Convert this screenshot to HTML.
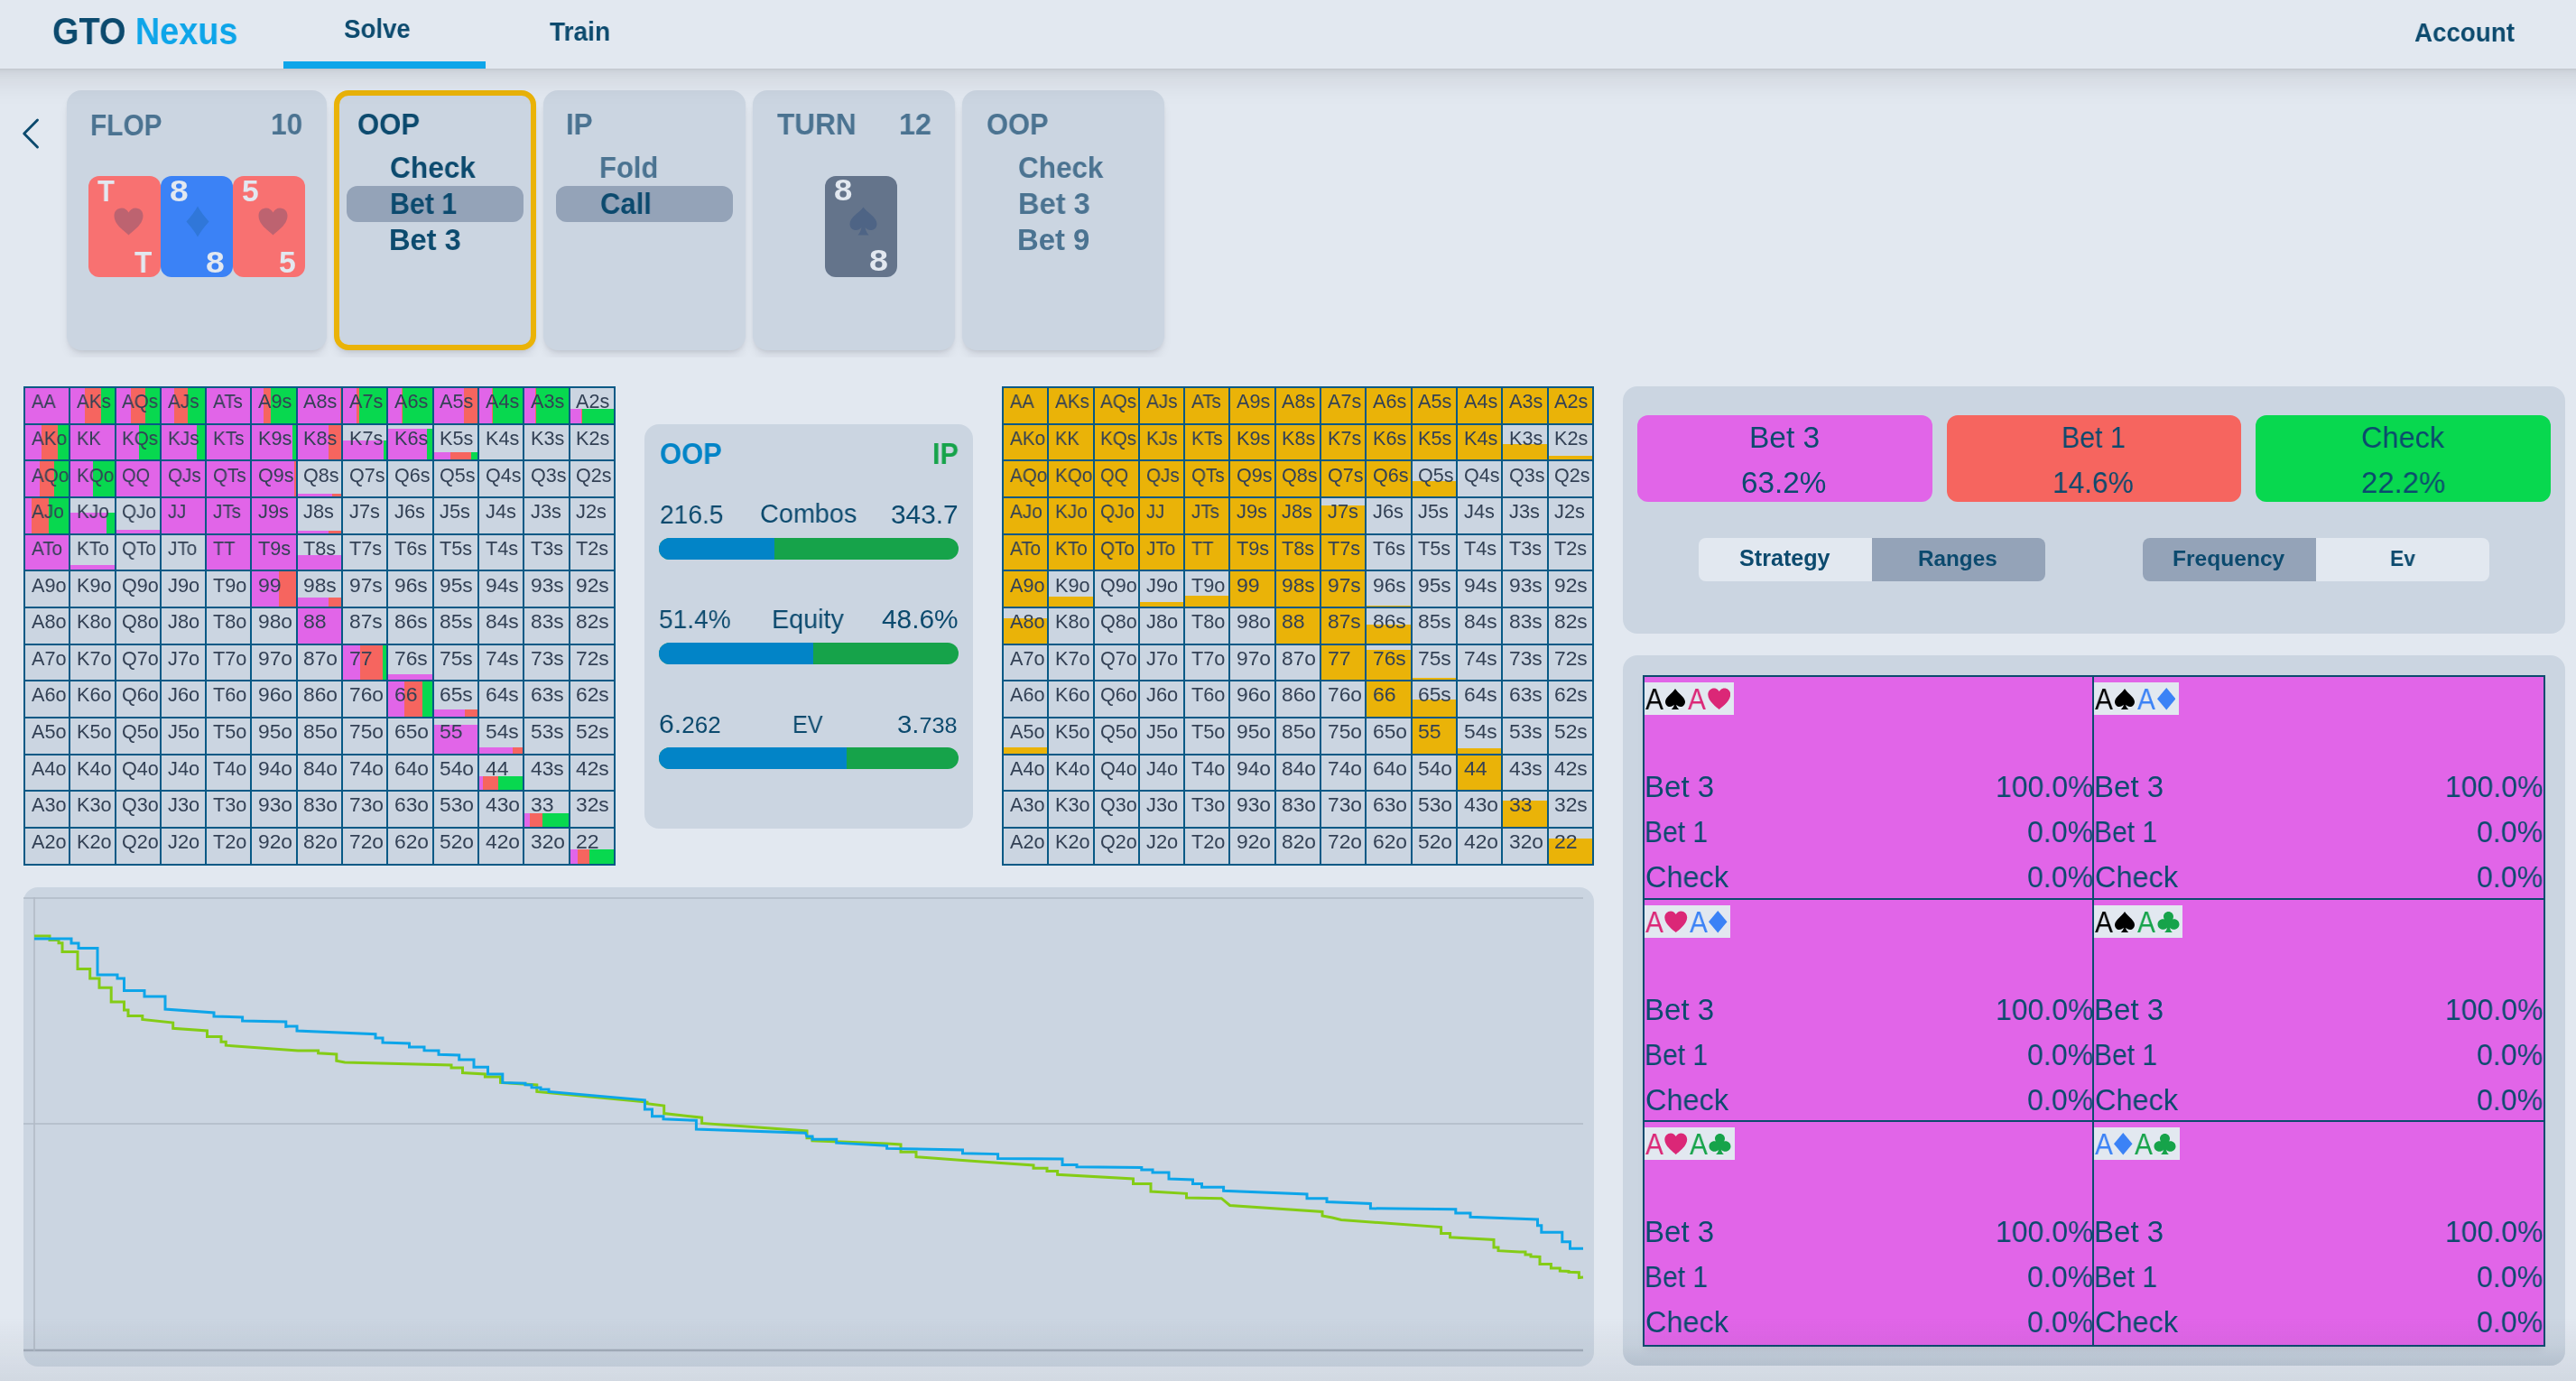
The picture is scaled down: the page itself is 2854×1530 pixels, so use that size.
<!DOCTYPE html>
<html><head><meta charset="utf-8"><title>GTO Nexus</title>
<style>
*{box-sizing:border-box;margin:0;padding:0}
html,body{width:2854px;height:1530px;overflow:hidden;background:#e2e8f0;font-family:"Liberation Sans",sans-serif;color:#0c4a6e}
.abs{position:absolute}
.t{position:absolute;white-space:nowrap;transform-origin:0 0;will-change:transform}
#hdr{position:absolute;z-index:10;left:-60px;top:0;width:2974px;padding-left:60px;height:76px;background:#e2e8f0;box-shadow:0 20px 30px -6px rgba(0,0,0,.085),0 8px 12px -8px rgba(0,0,0,.09),0 2px 2px -1px rgba(0,0,0,.06)}
.uline{position:absolute;left:314px;top:68px;width:224px;height:8px;background:#0ea5e9}
.card{position:absolute;top:100px;height:288px;background:#cbd5e1;border-radius:16px;box-shadow:0 8px 12px -3px rgba(15,23,42,.10),0 3px 5px -2px rgba(15,23,42,.10)}
.hl{position:absolute;height:40px;background:#94a3b8;border-radius:12px}
.pc{position:absolute;top:195px;width:80px;height:112px;border-radius:12px}
.sv{position:absolute}
.grid{position:absolute;top:428px;width:656px;height:531px;background:#075985;padding:2px;display:grid;grid-template-columns:repeat(13,48.3px);grid-template-rows:repeat(13,38.67px);gap:2px}
.c{position:relative;background:#cbd5e1;overflow:hidden}
.c b{position:absolute;left:0;right:0;bottom:0;display:flex}
.c b i{display:block;height:100%}
.c span{position:absolute;left:6.70px;top:5.22px;font-size:21.37px;line-height:21.37px;color:#334155;white-space:nowrap;transform:scaleX(0.95);transform-origin:0 0;will-change:transform}
.panel{position:absolute;background:#cbd5e1;border-radius:16px}
.bar{position:absolute;left:730px;width:332px;height:24px;border-radius:12px;overflow:hidden;background:#16a34a}
.bar i{position:absolute;left:0;top:0;bottom:0;background:#0284c7}
.abtn{position:absolute;top:460px;width:327px;height:95.5px;border-radius:12px}
.tog{position:absolute;top:596px;height:48px}
.lbx{position:absolute;height:36px;background:#e2e8f0}
</style></head>
<body>
<div id="hdr"><div style="position:absolute;left:60px;top:0;width:2854px;height:76px"><div class="uline"></div><div class="t " style="left:58.49px;top:14.34px;font-size:41.72px;line-height:41.72px;font-weight:bold;color:#0c4a6e;transform:scaleX(0.9073);">GTO <span style="color:#0ea5e9">Nexus</span></div><div class="t " style="left:381.37px;top:17.05px;font-size:29.51px;line-height:29.51px;font-weight:bold;color:#0c4a6e;transform:scaleX(0.9367);">Solve</div><div class="t " style="left:608.82px;top:21.39px;font-size:29.22px;line-height:29.22px;font-weight:bold;color:#0c4a6e;transform:scaleX(0.9619);">Train</div><div class="t " style="left:2674.51px;top:20.82px;font-size:29.36px;line-height:29.36px;font-weight:bold;color:#0c4a6e;transform:scaleX(0.9446);">Account</div></div></div>

<div id="cardrow" style="position:absolute;left:0;top:0;width:2854px;height:396px;overflow:hidden">
<svg class="abs" style="left:20px;top:126px" width="30" height="44" viewBox="0 0 30 44"><polyline points="21.5,7 6.7,22 21.5,37" fill="none" stroke="#0c4a6e" stroke-width="2.9" stroke-linecap="round" stroke-linejoin="round"/></svg>

<div class="card" style="left:74px;width:288px"></div>
<div class="card" style="left:370px;width:224px;border:6px solid #eab308"></div>
<div class="card" style="left:602px;width:224px"></div>
<div class="card" style="left:834px;width:224px"></div>
<div class="card" style="left:1066px;width:224px"></div>
<div class="hl" style="left:384px;top:206px;width:196px"></div>
<div class="hl" style="left:616px;top:206px;width:196px"></div>

<div class="pc" style="left:98px;background:#f87171"></div>
<div class="pc" style="left:178px;background:#3b82f6"></div>
<div class="pc" style="left:258px;background:#f87171"></div>
<div class="pc" style="left:914px;background:#64748b"></div>
<svg class="sv" style="left:126px;top:230px" width="33" height="31" viewBox="0 0 33 31"><path d="M16.5 30.5 C12 26 0.5 19 0.5 9 C0.5 4 4 0.5 8.8 0.5 C12.3 0.5 15 2.6 16.5 5.6 C18 2.6 20.7 0.5 24.2 0.5 C29 0.5 32.5 4 32.5 9 C32.5 19 21 26 16.5 30.5Z" fill="#bd6370"/></svg>
<svg class="sv" style="left:205.5px;top:227.5px" width="26" height="35" viewBox="0 0 26 35"><path d="M13 0.5 C16 6 20.5 12 25.5 17.5 C20.5 23 16 29 13 34.5 C10 29 5.5 23 0.5 17.5 C5.5 12 10 6 13 0.5Z" fill="#3077d9"/></svg>
<svg class="sv" style="left:286px;top:230px" width="33" height="31" viewBox="0 0 33 31"><path d="M16.5 30.5 C12 26 0.5 19 0.5 9 C0.5 4 4 0.5 8.8 0.5 C12.3 0.5 15 2.6 16.5 5.6 C18 2.6 20.7 0.5 24.2 0.5 C29 0.5 32.5 4 32.5 9 C32.5 19 21 26 16.5 30.5Z" fill="#bd6370"/></svg>
<svg class="sv" style="left:941px;top:229px" width="31" height="32" viewBox="0 0 31 32"><path d="M15.5 0.5 C19 6 30.5 11.5 30.5 19 C30.5 23.5 27.2 26 23.8 26 C21.2 26 19.2 24.8 17.6 23 C18 26.5 19.5 29 21.5 31.5 L9.5 31.5 C11.5 29 13 26.5 13.4 23 C11.8 24.8 9.8 26 7.2 26 C3.8 26 0.5 23.5 0.5 19 C0.5 11.5 12 6 15.5 0.5Z" fill="#4e6485"/></svg>
<div class="t " style="left:108.29px;top:194.71px;font-size:33.58px;line-height:33.58px;font-weight:bold;color:#e2e8f0;transform:scaleX(0.9238);">T</div><div class="t " style="left:148.88px;top:273.76px;font-size:33.28px;line-height:33.28px;font-weight:bold;color:#e2e8f0;transform:scaleX(0.9471);">T</div><div class="t " style="left:187.79px;top:194.29px;font-size:34.01px;line-height:34.01px;font-weight:bold;color:#e2e8f0;transform:scaleX(1.0925);">8</div><div class="t " style="left:227.59px;top:274.31px;font-size:33.58px;line-height:33.58px;font-weight:bold;color:#e2e8f0;transform:scaleX(1.1127);">8</div><div class="t " style="left:268.49px;top:194.71px;font-size:33.58px;line-height:33.58px;font-weight:bold;color:#e2e8f0;transform:scaleX(0.9998);">5</div><div class="t " style="left:308.99px;top:273.78px;font-size:33.43px;line-height:33.43px;font-weight:bold;color:#e2e8f0;transform:scaleX(1.0101);">5</div><div class="t " style="left:924.21px;top:194.65px;font-size:32.70px;line-height:32.70px;font-weight:bold;color:#e2e8f0;transform:scaleX(1.1176);">8</div><div class="t " style="left:963.47px;top:273.15px;font-size:32.70px;line-height:32.70px;font-weight:bold;color:#e2e8f0;transform:scaleX(1.1548);">8</div>
<div class="t " style="left:100.39px;top:121.76px;font-size:33.28px;line-height:33.28px;font-weight:bold;color:#4b7391;transform:scaleX(0.8960);">FLOP</div><div class="t " style="left:300.02px;top:121.37px;font-size:33.87px;line-height:33.87px;font-weight:bold;color:#4b7391;transform:scaleX(0.9349);">10</div><div class="t " style="left:396.46px;top:121.34px;font-size:33.72px;line-height:33.72px;font-weight:bold;color:#0c4a6e;transform:scaleX(0.9211);">OOP</div><div class="t " style="left:432.33px;top:169.27px;font-size:33.87px;line-height:33.87px;font-weight:bold;color:#0c4a6e;transform:scaleX(0.9339);">Check</div><div class="t " style="left:431.55px;top:209.41px;font-size:33.58px;line-height:33.58px;font-weight:bold;color:#0c4a6e;transform:scaleX(0.9024);">Bet 1</div><div class="t " style="left:431.40px;top:249.65px;font-size:32.70px;line-height:32.70px;font-weight:bold;color:#0c4a6e;transform:scaleX(0.9973);">Bet 3</div><div class="t " style="left:627.28px;top:121.34px;font-size:33.72px;line-height:33.72px;font-weight:bold;color:#4b7391;transform:scaleX(0.9328);">IP</div><div class="t " style="left:663.71px;top:169.27px;font-size:33.87px;line-height:33.87px;font-weight:bold;color:#4b7391;transform:scaleX(0.9153);">Fold</div><div class="t " style="left:664.56px;top:209.41px;font-size:33.58px;line-height:33.58px;font-weight:bold;color:#0c4a6e;transform:scaleX(0.9233);">Call</div><div class="t " style="left:861.08px;top:121.34px;font-size:33.72px;line-height:33.72px;font-weight:bold;color:#4b7391;transform:scaleX(0.9369);">TURN</div><div class="t " style="left:996.38px;top:121.34px;font-size:33.72px;line-height:33.72px;font-weight:bold;color:#4b7391;transform:scaleX(0.9596);">12</div><div class="t " style="left:1092.57px;top:121.34px;font-size:33.72px;line-height:33.72px;font-weight:bold;color:#4b7391;transform:scaleX(0.9142);">OOP</div><div class="t " style="left:1128.44px;top:169.27px;font-size:33.87px;line-height:33.87px;font-weight:bold;color:#4b7391;transform:scaleX(0.9289);">Check</div><div class="t " style="left:1127.50px;top:209.41px;font-size:33.58px;line-height:33.58px;font-weight:bold;color:#4b7391;transform:scaleX(0.9701);">Bet 3</div><div class="t " style="left:1127.48px;top:249.65px;font-size:32.70px;line-height:32.70px;font-weight:bold;color:#4b7391;transform:scaleX(1.0051);">Bet 9</div>
</div>

<div class="grid" style="left:26px"><div class="c"><b style="height:100.00%"><i style="width:100.00%;background:#e165e8"></i></b><span style="transform:scaleX(0.940)">AA</span></div><div class="c"><b style="height:100.00%"><i style="width:33.00%;background:#e165e8"></i><i style="width:36.00%;background:#f6655f"></i><i style="width:31.00%;background:#08d84f"></i></b><span style="transform:scaleX(0.967)">AKs</span></div><div class="c"><b style="height:100.00%"><i style="width:34.00%;background:#e165e8"></i><i style="width:33.00%;background:#f6655f"></i><i style="width:33.00%;background:#08d84f"></i></b><span style="transform:scaleX(0.966)">AQs</span></div><div class="c"><b style="height:100.00%"><i style="width:29.00%;background:#e165e8"></i><i style="width:31.00%;background:#f6655f"></i><i style="width:40.00%;background:#08d84f"></i></b><span style="transform:scaleX(0.970)">AJs</span></div><div class="c"><b style="height:100.00%"><i style="width:100.00%;background:#e165e8"></i></b><span style="transform:scaleX(0.968)">ATs</span></div><div class="c"><b style="height:100.00%"><i style="width:25.00%;background:#e165e8"></i><i style="width:18.00%;background:#f6655f"></i><i style="width:57.00%;background:#08d84f"></i></b><span style="transform:scaleX(1.014)">A9s</span></div><div class="c"><b style="height:100.00%"><i style="width:98.50%;background:#e165e8"></i><i style="width:1.50%;background:#f6655f"></i></b><span style="transform:scaleX(1.014)">A8s</span></div><div class="c"><b style="height:100.00%"><i style="width:31.00%;background:#e165e8"></i><i style="width:6.00%;background:#f6655f"></i><i style="width:63.00%;background:#08d84f"></i></b><span style="transform:scaleX(1.014)">A7s</span></div><div class="c"><b style="height:100.00%"><i style="width:30.00%;background:#e165e8"></i><i style="width:2.00%;background:#f6655f"></i><i style="width:68.00%;background:#08d84f"></i></b><span style="transform:scaleX(1.014)">A6s</span></div><div class="c"><b style="height:100.00%"><i style="width:69.00%;background:#e165e8"></i><i style="width:31.00%;background:#f6655f"></i></b><span style="transform:scaleX(1.014)">A5s</span></div><div class="c"><b style="height:100.00%"><i style="width:29.00%;background:#e165e8"></i><i style="width:2.00%;background:#f6655f"></i><i style="width:69.00%;background:#08d84f"></i></b><span style="transform:scaleX(1.014)">A4s</span></div><div class="c"><b style="height:100.00%"><i style="width:25.00%;background:#e165e8"></i><i style="width:2.00%;background:#f6655f"></i><i style="width:73.00%;background:#08d84f"></i></b><span style="transform:scaleX(1.014)">A3s</span></div><div class="c"><b style="height:40.00%"><i style="width:25.00%;background:#e165e8"></i><i style="width:2.00%;background:#f6655f"></i><i style="width:73.00%;background:#08d84f"></i></b><span style="transform:scaleX(1.014)">A2s</span></div><div class="c"><b style="height:100.00%"><i style="width:38.00%;background:#e165e8"></i><i style="width:37.00%;background:#f6655f"></i><i style="width:25.00%;background:#08d84f"></i></b><span style="transform:scaleX(0.969)">AKo</span></div><div class="c"><b style="height:100.00%"><i style="width:100.00%;background:#e165e8"></i></b><span style="transform:scaleX(0.940)">KK</span></div><div class="c"><b style="height:100.00%"><i style="width:52.00%;background:#e165e8"></i><i style="width:48.00%;background:#08d84f"></i></b><span style="transform:scaleX(0.966)">KQs</span></div><div class="c"><b style="height:100.00%"><i style="width:81.00%;background:#e165e8"></i><i style="width:19.00%;background:#08d84f"></i></b><span style="transform:scaleX(0.970)">KJs</span></div><div class="c"><b style="height:100.00%"><i style="width:100.00%;background:#e165e8"></i></b><span style="transform:scaleX(0.968)">KTs</span></div><div class="c"><b style="height:100.00%"><i style="width:92.00%;background:#e165e8"></i><i style="width:8.00%;background:#08d84f"></i></b><span style="transform:scaleX(1.014)">K9s</span></div><div class="c"><b style="height:100.00%"><i style="width:71.00%;background:#e165e8"></i><i style="width:29.00%;background:#f6655f"></i></b><span style="transform:scaleX(1.014)">K8s</span></div><div class="c"><b style="height:55.00%"><i style="width:94.00%;background:#e165e8"></i><i style="width:6.00%;background:#08d84f"></i></b><span style="transform:scaleX(1.014)">K7s</span></div><div class="c"><b style="height:89.00%"><i style="width:88.00%;background:#e165e8"></i><i style="width:12.00%;background:#08d84f"></i></b><span style="transform:scaleX(1.014)">K6s</span></div><div class="c"><b style="height:21.00%"><i style="width:38.00%;background:#e165e8"></i><i style="width:48.00%;background:#f6655f"></i><i style="width:14.00%;background:#08d84f"></i></b><span style="transform:scaleX(1.014)">K5s</span></div><div class="c"><span style="transform:scaleX(1.014)">K4s</span></div><div class="c"><span style="transform:scaleX(1.014)">K3s</span></div><div class="c"><span style="transform:scaleX(1.014)">K2s</span></div><div class="c"><b style="height:100.00%"><i style="width:34.00%;background:#e165e8"></i><i style="width:33.00%;background:#f6655f"></i><i style="width:33.00%;background:#08d84f"></i></b><span style="transform:scaleX(0.968)">AQo</span></div><div class="c"><b style="height:100.00%"><i style="width:51.00%;background:#e165e8"></i><i style="width:49.00%;background:#08d84f"></i></b><span style="transform:scaleX(0.968)">KQo</span></div><div class="c"><b style="height:100.00%"><i style="width:100.00%;background:#e165e8"></i></b><span style="transform:scaleX(0.940)">QQ</span></div><div class="c"><b style="height:100.00%"><i style="width:100.00%;background:#e165e8"></i></b><span style="transform:scaleX(0.968)">QJs</span></div><div class="c"><b style="height:100.00%"><i style="width:100.00%;background:#e165e8"></i></b><span style="transform:scaleX(0.966)">QTs</span></div><div class="c"><b style="height:100.00%"><i style="width:96.00%;background:#e165e8"></i><i style="width:4.00%;background:#f6655f"></i></b><span style="transform:scaleX(1.010)">Q9s</span></div><div class="c"><b style="height:6.50%"><i style="width:79.00%;background:#e165e8"></i><i style="width:21.00%;background:#f6655f"></i></b><span style="transform:scaleX(1.010)">Q8s</span></div><div class="c"><span style="transform:scaleX(1.010)">Q7s</span></div><div class="c"><span style="transform:scaleX(1.010)">Q6s</span></div><div class="c"><span style="transform:scaleX(1.010)">Q5s</span></div><div class="c"><span style="transform:scaleX(1.010)">Q4s</span></div><div class="c"><span style="transform:scaleX(1.010)">Q3s</span></div><div class="c"><span style="transform:scaleX(1.010)">Q2s</span></div><div class="c"><b style="height:100.00%"><i style="width:15.00%;background:#e165e8"></i><i style="width:39.00%;background:#f6655f"></i><i style="width:46.00%;background:#08d84f"></i></b><span style="transform:scaleX(0.972)">AJo</span></div><div class="c"><b style="height:58.00%"><i style="width:82.00%;background:#e165e8"></i><i style="width:18.00%;background:#08d84f"></i></b><span style="transform:scaleX(0.972)">KJo</span></div><div class="c"><b style="height:10.00%"><i style="width:100.00%;background:#e165e8"></i></b><span style="transform:scaleX(0.970)">QJo</span></div><div class="c"><b style="height:100.00%"><i style="width:100.00%;background:#e165e8"></i></b><span style="transform:scaleX(0.940)">JJ</span></div><div class="c"><b style="height:100.00%"><i style="width:100.00%;background:#e165e8"></i></b><span style="transform:scaleX(0.971)">JTs</span></div><div class="c"><b style="height:100.00%"><i style="width:100.00%;background:#e165e8"></i></b><span style="transform:scaleX(1.022)">J9s</span></div><div class="c"><b style="height:8.00%"><i style="width:71.00%;background:#e165e8"></i><i style="width:29.00%;background:#f6655f"></i></b><span style="transform:scaleX(1.022)">J8s</span></div><div class="c"><span style="transform:scaleX(1.022)">J7s</span></div><div class="c"><span style="transform:scaleX(1.022)">J6s</span></div><div class="c"><span style="transform:scaleX(1.022)">J5s</span></div><div class="c"><span style="transform:scaleX(1.022)">J4s</span></div><div class="c"><span style="transform:scaleX(1.022)">J3s</span></div><div class="c"><span style="transform:scaleX(1.022)">J2s</span></div><div class="c"><b style="height:100.00%"><i style="width:100.00%;background:#e165e8"></i></b><span style="transform:scaleX(0.970)">ATo</span></div><div class="c"><b style="height:14.50%"><i style="width:100.00%;background:#e165e8"></i></b><span style="transform:scaleX(0.970)">KTo</span></div><div class="c"><span style="transform:scaleX(0.969)">QTo</span></div><div class="c"><span style="transform:scaleX(0.973)">JTo</span></div><div class="c"><b style="height:100.00%"><i style="width:100.00%;background:#e165e8"></i></b><span style="transform:scaleX(0.940)">TT</span></div><div class="c"><b style="height:100.00%"><i style="width:100.00%;background:#e165e8"></i></b><span style="transform:scaleX(1.017)">T9s</span></div><div class="c"><b style="height:42.00%"><i style="width:100.00%;background:#e165e8"></i></b><span style="transform:scaleX(1.017)">T8s</span></div><div class="c"><span style="transform:scaleX(1.017)">T7s</span></div><div class="c"><span style="transform:scaleX(1.017)">T6s</span></div><div class="c"><span style="transform:scaleX(1.017)">T5s</span></div><div class="c"><span style="transform:scaleX(1.017)">T4s</span></div><div class="c"><span style="transform:scaleX(1.017)">T3s</span></div><div class="c"><span style="transform:scaleX(1.017)">T2s</span></div><div class="c"><span style="transform:scaleX(1.015)">A9o</span></div><div class="c"><span style="transform:scaleX(1.015)">K9o</span></div><div class="c"><span style="transform:scaleX(1.011)">Q9o</span></div><div class="c"><span style="transform:scaleX(1.023)">J9o</span></div><div class="c"><span style="transform:scaleX(1.017)">T9o</span></div><div class="c"><b style="height:100.00%"><i style="width:62.00%;background:#e165e8"></i><i style="width:38.00%;background:#f6655f"></i></b><span style="transform:scaleX(1.080)">99</span></div><div class="c"><b style="height:24.50%"><i style="width:71.00%;background:#e165e8"></i><i style="width:29.00%;background:#f6655f"></i></b><span style="transform:scaleX(1.068)">98s</span></div><div class="c"><span style="transform:scaleX(1.068)">97s</span></div><div class="c"><span style="transform:scaleX(1.068)">96s</span></div><div class="c"><span style="transform:scaleX(1.068)">95s</span></div><div class="c"><span style="transform:scaleX(1.068)">94s</span></div><div class="c"><span style="transform:scaleX(1.068)">93s</span></div><div class="c"><span style="transform:scaleX(1.068)">92s</span></div><div class="c"><span style="transform:scaleX(1.015)">A8o</span></div><div class="c"><span style="transform:scaleX(1.015)">K8o</span></div><div class="c"><span style="transform:scaleX(1.011)">Q8o</span></div><div class="c"><span style="transform:scaleX(1.023)">J8o</span></div><div class="c"><span style="transform:scaleX(1.017)">T8o</span></div><div class="c"><span style="transform:scaleX(1.067)">98o</span></div><div class="c"><b style="height:100.00%"><i style="width:100.00%;background:#e165e8"></i></b><span style="transform:scaleX(1.080)">88</span></div><div class="c"><span style="transform:scaleX(1.068)">87s</span></div><div class="c"><span style="transform:scaleX(1.068)">86s</span></div><div class="c"><span style="transform:scaleX(1.068)">85s</span></div><div class="c"><span style="transform:scaleX(1.068)">84s</span></div><div class="c"><span style="transform:scaleX(1.068)">83s</span></div><div class="c"><span style="transform:scaleX(1.068)">82s</span></div><div class="c"><span style="transform:scaleX(1.015)">A7o</span></div><div class="c"><span style="transform:scaleX(1.015)">K7o</span></div><div class="c"><span style="transform:scaleX(1.011)">Q7o</span></div><div class="c"><span style="transform:scaleX(1.023)">J7o</span></div><div class="c"><span style="transform:scaleX(1.017)">T7o</span></div><div class="c"><span style="transform:scaleX(1.067)">97o</span></div><div class="c"><span style="transform:scaleX(1.067)">87o</span></div><div class="c"><b style="height:100.00%"><i style="width:39.00%;background:#e165e8"></i><i style="width:51.00%;background:#f6655f"></i><i style="width:10.00%;background:#08d84f"></i></b><span style="transform:scaleX(1.080)">77</span></div><div class="c"><b style="height:17.00%"><i style="width:100.00%;background:#e165e8"></i></b><span style="transform:scaleX(1.068)">76s</span></div><div class="c"><span style="transform:scaleX(1.068)">75s</span></div><div class="c"><span style="transform:scaleX(1.068)">74s</span></div><div class="c"><span style="transform:scaleX(1.068)">73s</span></div><div class="c"><span style="transform:scaleX(1.068)">72s</span></div><div class="c"><span style="transform:scaleX(1.015)">A6o</span></div><div class="c"><span style="transform:scaleX(1.015)">K6o</span></div><div class="c"><span style="transform:scaleX(1.011)">Q6o</span></div><div class="c"><span style="transform:scaleX(1.023)">J6o</span></div><div class="c"><span style="transform:scaleX(1.017)">T6o</span></div><div class="c"><span style="transform:scaleX(1.067)">96o</span></div><div class="c"><span style="transform:scaleX(1.067)">86o</span></div><div class="c"><span style="transform:scaleX(1.067)">76o</span></div><div class="c"><b style="height:100.00%"><i style="width:36.00%;background:#e165e8"></i><i style="width:42.00%;background:#f6655f"></i><i style="width:22.00%;background:#08d84f"></i></b><span style="transform:scaleX(1.080)">66</span></div><div class="c"><b style="height:20.00%"><i style="width:71.00%;background:#e165e8"></i><i style="width:29.00%;background:#f6655f"></i></b><span style="transform:scaleX(1.068)">65s</span></div><div class="c"><span style="transform:scaleX(1.068)">64s</span></div><div class="c"><span style="transform:scaleX(1.068)">63s</span></div><div class="c"><span style="transform:scaleX(1.068)">62s</span></div><div class="c"><span style="transform:scaleX(1.015)">A5o</span></div><div class="c"><span style="transform:scaleX(1.015)">K5o</span></div><div class="c"><span style="transform:scaleX(1.011)">Q5o</span></div><div class="c"><span style="transform:scaleX(1.023)">J5o</span></div><div class="c"><span style="transform:scaleX(1.017)">T5o</span></div><div class="c"><span style="transform:scaleX(1.067)">95o</span></div><div class="c"><span style="transform:scaleX(1.067)">85o</span></div><div class="c"><span style="transform:scaleX(1.067)">75o</span></div><div class="c"><span style="transform:scaleX(1.067)">65o</span></div><div class="c"><b style="height:82.00%"><i style="width:100.00%;background:#e165e8"></i></b><span style="transform:scaleX(1.080)">55</span></div><div class="c"><b style="height:17.00%"><i style="width:77.00%;background:#e165e8"></i><i style="width:23.00%;background:#f6655f"></i></b><span style="transform:scaleX(1.068)">54s</span></div><div class="c"><span style="transform:scaleX(1.068)">53s</span></div><div class="c"><span style="transform:scaleX(1.068)">52s</span></div><div class="c"><span style="transform:scaleX(1.015)">A4o</span></div><div class="c"><span style="transform:scaleX(1.015)">K4o</span></div><div class="c"><span style="transform:scaleX(1.011)">Q4o</span></div><div class="c"><span style="transform:scaleX(1.023)">J4o</span></div><div class="c"><span style="transform:scaleX(1.017)">T4o</span></div><div class="c"><span style="transform:scaleX(1.067)">94o</span></div><div class="c"><span style="transform:scaleX(1.067)">84o</span></div><div class="c"><span style="transform:scaleX(1.067)">74o</span></div><div class="c"><span style="transform:scaleX(1.067)">64o</span></div><div class="c"><span style="transform:scaleX(1.067)">54o</span></div><div class="c"><b style="height:40.00%"><i style="width:8.00%;background:#e165e8"></i><i style="width:35.00%;background:#f6655f"></i><i style="width:57.00%;background:#08d84f"></i></b><span style="transform:scaleX(1.080)">44</span></div><div class="c"><span style="transform:scaleX(1.068)">43s</span></div><div class="c"><span style="transform:scaleX(1.068)">42s</span></div><div class="c"><span style="transform:scaleX(1.015)">A3o</span></div><div class="c"><span style="transform:scaleX(1.015)">K3o</span></div><div class="c"><span style="transform:scaleX(1.011)">Q3o</span></div><div class="c"><span style="transform:scaleX(1.023)">J3o</span></div><div class="c"><span style="transform:scaleX(1.017)">T3o</span></div><div class="c"><span style="transform:scaleX(1.067)">93o</span></div><div class="c"><span style="transform:scaleX(1.067)">83o</span></div><div class="c"><span style="transform:scaleX(1.067)">73o</span></div><div class="c"><span style="transform:scaleX(1.067)">63o</span></div><div class="c"><span style="transform:scaleX(1.067)">53o</span></div><div class="c"><span style="transform:scaleX(1.067)">43o</span></div><div class="c"><b style="height:39.00%"><i style="width:12.50%;background:#e165e8"></i><i style="width:29.00%;background:#f6655f"></i><i style="width:58.50%;background:#08d84f"></i></b><span style="transform:scaleX(1.080)">33</span></div><div class="c"><span style="transform:scaleX(1.068)">32s</span></div><div class="c"><span style="transform:scaleX(1.015)">A2o</span></div><div class="c"><span style="transform:scaleX(1.015)">K2o</span></div><div class="c"><span style="transform:scaleX(1.011)">Q2o</span></div><div class="c"><span style="transform:scaleX(1.023)">J2o</span></div><div class="c"><span style="transform:scaleX(1.017)">T2o</span></div><div class="c"><span style="transform:scaleX(1.067)">92o</span></div><div class="c"><span style="transform:scaleX(1.067)">82o</span></div><div class="c"><span style="transform:scaleX(1.067)">72o</span></div><div class="c"><span style="transform:scaleX(1.067)">62o</span></div><div class="c"><span style="transform:scaleX(1.067)">52o</span></div><div class="c"><span style="transform:scaleX(1.067)">42o</span></div><div class="c"><span style="transform:scaleX(1.067)">32o</span></div><div class="c"><b style="height:39.00%"><i style="width:17.00%;background:#e165e8"></i><i style="width:27.00%;background:#f6655f"></i><i style="width:56.00%;background:#08d84f"></i></b><span style="transform:scaleX(1.080)">22</span></div></div>

<div class="panel" style="left:714px;top:470px;width:364px;height:448px"></div>
<div class="bar" style="top:596px"><i style="width:128px"></i></div>
<div class="bar" style="top:712px"><i style="width:171px"></i></div>
<div class="bar" style="top:828px"><i style="width:208px"></i></div>
<div class="t " style="left:730.76px;top:486.59px;font-size:32.41px;line-height:32.41px;font-weight:bold;color:#0284c7;transform:scaleX(0.9539);">OOP</div><div class="t " style="left:1032.93px;top:486.59px;font-size:32.41px;line-height:32.41px;font-weight:bold;color:#16a34a;transform:scaleX(0.9448);">IP</div><div class="t " style="left:730.59px;top:555.64px;font-size:28.92px;line-height:28.92px;font-weight:normal;color:#0c4a6e;transform:scaleX(0.9731);">216.5</div><div class="t " style="left:841.96px;top:555.47px;font-size:29.07px;line-height:29.07px;font-weight:normal;color:#0c4a6e;transform:scaleX(0.9920);">Combos</div><div class="t " style="left:987.18px;top:555.64px;font-size:28.92px;line-height:28.92px;font-weight:normal;color:#0c4a6e;transform:scaleX(1.0322);">343.7</div><div class="t " style="left:730.38px;top:671.07px;font-size:29.65px;line-height:29.65px;font-weight:normal;color:#0c4a6e;transform:scaleX(0.9470);">51.4%</div><div class="t " style="left:855.13px;top:671.07px;font-size:29.65px;line-height:29.65px;font-weight:normal;color:#0c4a6e;transform:scaleX(0.9698);">Equity</div><div class="t " style="left:976.83px;top:671.07px;font-size:29.65px;line-height:29.65px;font-weight:normal;color:#0c4a6e;transform:scaleX(1.0066);">48.6%</div><div class="t " style="left:729.59px;top:786.57px;font-size:29.65px;line-height:29.65px;font-weight:normal;color:#0c4a6e;transform:scaleX(1.0200);">6.<span style="font-size:86%">262</span></div><div class="t " style="left:878.22px;top:787.80px;font-size:28.20px;line-height:28.20px;font-weight:normal;color:#0c4a6e;transform:scaleX(0.8955);">EV</div><div class="t " style="left:994.00px;top:787.80px;font-size:28.20px;line-height:28.20px;font-weight:normal;color:#0c4a6e;transform:scaleX(1.0400);">3.<span style="font-size:86%">738</span></div>

<div class="grid" style="left:1110px"><div class="c"><b style="height:100.00%;background:#eab308"></b><span style="transform:scaleX(0.940)">AA</span></div><div class="c"><b style="height:100.00%;background:#eab308"></b><span style="transform:scaleX(0.967)">AKs</span></div><div class="c"><b style="height:100.00%;background:#eab308"></b><span style="transform:scaleX(0.966)">AQs</span></div><div class="c"><b style="height:100.00%;background:#eab308"></b><span style="transform:scaleX(0.970)">AJs</span></div><div class="c"><b style="height:100.00%;background:#eab308"></b><span style="transform:scaleX(0.968)">ATs</span></div><div class="c"><b style="height:100.00%;background:#eab308"></b><span style="transform:scaleX(1.014)">A9s</span></div><div class="c"><b style="height:100.00%;background:#eab308"></b><span style="transform:scaleX(1.014)">A8s</span></div><div class="c"><b style="height:100.00%;background:#eab308"></b><span style="transform:scaleX(1.014)">A7s</span></div><div class="c"><b style="height:100.00%;background:#eab308"></b><span style="transform:scaleX(1.014)">A6s</span></div><div class="c"><b style="height:100.00%;background:#eab308"></b><span style="transform:scaleX(1.014)">A5s</span></div><div class="c"><b style="height:100.00%;background:#eab308"></b><span style="transform:scaleX(1.014)">A4s</span></div><div class="c"><b style="height:100.00%;background:#eab308"></b><span style="transform:scaleX(1.014)">A3s</span></div><div class="c"><b style="height:100.00%;background:#eab308"></b><span style="transform:scaleX(1.014)">A2s</span></div><div class="c"><b style="height:100.00%;background:#eab308"></b><span style="transform:scaleX(0.969)">AKo</span></div><div class="c"><b style="height:100.00%;background:#eab308"></b><span style="transform:scaleX(0.940)">KK</span></div><div class="c"><b style="height:100.00%;background:#eab308"></b><span style="transform:scaleX(0.966)">KQs</span></div><div class="c"><b style="height:100.00%;background:#eab308"></b><span style="transform:scaleX(0.970)">KJs</span></div><div class="c"><b style="height:100.00%;background:#eab308"></b><span style="transform:scaleX(0.968)">KTs</span></div><div class="c"><b style="height:100.00%;background:#eab308"></b><span style="transform:scaleX(1.014)">K9s</span></div><div class="c"><b style="height:100.00%;background:#eab308"></b><span style="transform:scaleX(1.014)">K8s</span></div><div class="c"><b style="height:100.00%;background:#eab308"></b><span style="transform:scaleX(1.014)">K7s</span></div><div class="c"><b style="height:100.00%;background:#eab308"></b><span style="transform:scaleX(1.014)">K6s</span></div><div class="c"><b style="height:100.00%;background:#eab308"></b><span style="transform:scaleX(1.014)">K5s</span></div><div class="c"><b style="height:100.00%;background:#eab308"></b><span style="transform:scaleX(1.014)">K4s</span></div><div class="c"><b style="height:44.00%;background:#eab308"></b><span style="transform:scaleX(1.014)">K3s</span></div><div class="c"><b style="height:10.50%;background:#eab308"></b><span style="transform:scaleX(1.014)">K2s</span></div><div class="c"><b style="height:100.00%;background:#eab308"></b><span style="transform:scaleX(0.968)">AQo</span></div><div class="c"><b style="height:100.00%;background:#eab308"></b><span style="transform:scaleX(0.968)">KQo</span></div><div class="c"><b style="height:100.00%;background:#eab308"></b><span style="transform:scaleX(0.940)">QQ</span></div><div class="c"><b style="height:100.00%;background:#eab308"></b><span style="transform:scaleX(0.968)">QJs</span></div><div class="c"><b style="height:100.00%;background:#eab308"></b><span style="transform:scaleX(0.966)">QTs</span></div><div class="c"><b style="height:100.00%;background:#eab308"></b><span style="transform:scaleX(1.010)">Q9s</span></div><div class="c"><b style="height:100.00%;background:#eab308"></b><span style="transform:scaleX(1.010)">Q8s</span></div><div class="c"><b style="height:100.00%;background:#eab308"></b><span style="transform:scaleX(1.010)">Q7s</span></div><div class="c"><b style="height:100.00%;background:#eab308"></b><span style="transform:scaleX(1.010)">Q6s</span></div><div class="c"><b style="height:45.00%;background:#eab308"></b><span style="transform:scaleX(1.010)">Q5s</span></div><div class="c"><span style="transform:scaleX(1.010)">Q4s</span></div><div class="c"><span style="transform:scaleX(1.010)">Q3s</span></div><div class="c"><span style="transform:scaleX(1.010)">Q2s</span></div><div class="c"><b style="height:100.00%;background:#eab308"></b><span style="transform:scaleX(0.972)">AJo</span></div><div class="c"><b style="height:100.00%;background:#eab308"></b><span style="transform:scaleX(0.972)">KJo</span></div><div class="c"><b style="height:100.00%;background:#eab308"></b><span style="transform:scaleX(0.970)">QJo</span></div><div class="c"><b style="height:100.00%;background:#eab308"></b><span style="transform:scaleX(0.940)">JJ</span></div><div class="c"><b style="height:100.00%;background:#eab308"></b><span style="transform:scaleX(0.971)">JTs</span></div><div class="c"><b style="height:100.00%;background:#eab308"></b><span style="transform:scaleX(1.022)">J9s</span></div><div class="c"><b style="height:100.00%;background:#eab308"></b><span style="transform:scaleX(1.022)">J8s</span></div><div class="c"><b style="height:79.00%;background:#eab308"></b><span style="transform:scaleX(1.022)">J7s</span></div><div class="c"><span style="transform:scaleX(1.022)">J6s</span></div><div class="c"><span style="transform:scaleX(1.022)">J5s</span></div><div class="c"><span style="transform:scaleX(1.022)">J4s</span></div><div class="c"><span style="transform:scaleX(1.022)">J3s</span></div><div class="c"><span style="transform:scaleX(1.022)">J2s</span></div><div class="c"><b style="height:100.00%;background:#eab308"></b><span style="transform:scaleX(0.970)">ATo</span></div><div class="c"><b style="height:100.00%;background:#eab308"></b><span style="transform:scaleX(0.970)">KTo</span></div><div class="c"><b style="height:100.00%;background:#eab308"></b><span style="transform:scaleX(0.969)">QTo</span></div><div class="c"><b style="height:100.00%;background:#eab308"></b><span style="transform:scaleX(0.973)">JTo</span></div><div class="c"><b style="height:100.00%;background:#eab308"></b><span style="transform:scaleX(0.940)">TT</span></div><div class="c"><b style="height:100.00%;background:#eab308"></b><span style="transform:scaleX(1.017)">T9s</span></div><div class="c"><b style="height:100.00%;background:#eab308"></b><span style="transform:scaleX(1.017)">T8s</span></div><div class="c"><b style="height:100.00%;background:#eab308"></b><span style="transform:scaleX(1.017)">T7s</span></div><div class="c"><span style="transform:scaleX(1.017)">T6s</span></div><div class="c"><span style="transform:scaleX(1.017)">T5s</span></div><div class="c"><span style="transform:scaleX(1.017)">T4s</span></div><div class="c"><span style="transform:scaleX(1.017)">T3s</span></div><div class="c"><span style="transform:scaleX(1.017)">T2s</span></div><div class="c"><b style="height:100.00%;background:#eab308"></b><span style="transform:scaleX(1.015)">A9o</span></div><div class="c"><b style="height:28.00%;background:#eab308"></b><span style="transform:scaleX(1.015)">K9o</span></div><div class="c"><span style="transform:scaleX(1.011)">Q9o</span></div><div class="c"><b style="height:12.00%;background:#eab308"></b><span style="transform:scaleX(1.023)">J9o</span></div><div class="c"><b style="height:30.00%;background:#eab308"></b><span style="transform:scaleX(1.017)">T9o</span></div><div class="c"><b style="height:100.00%;background:#eab308"></b><span style="transform:scaleX(1.080)">99</span></div><div class="c"><b style="height:100.00%;background:#eab308"></b><span style="transform:scaleX(1.068)">98s</span></div><div class="c"><b style="height:100.00%;background:#eab308"></b><span style="transform:scaleX(1.068)">97s</span></div><div class="c"><b style="height:2.00%;background:#eab308"></b><span style="transform:scaleX(1.068)">96s</span></div><div class="c"><span style="transform:scaleX(1.068)">95s</span></div><div class="c"><span style="transform:scaleX(1.068)">94s</span></div><div class="c"><span style="transform:scaleX(1.068)">93s</span></div><div class="c"><span style="transform:scaleX(1.068)">92s</span></div><div class="c"><b style="height:71.00%;background:#eab308"></b><span style="transform:scaleX(1.015)">A8o</span></div><div class="c"><span style="transform:scaleX(1.015)">K8o</span></div><div class="c"><span style="transform:scaleX(1.011)">Q8o</span></div><div class="c"><span style="transform:scaleX(1.023)">J8o</span></div><div class="c"><span style="transform:scaleX(1.017)">T8o</span></div><div class="c"><span style="transform:scaleX(1.067)">98o</span></div><div class="c"><b style="height:100.00%;background:#eab308"></b><span style="transform:scaleX(1.080)">88</span></div><div class="c"><b style="height:100.00%;background:#eab308"></b><span style="transform:scaleX(1.068)">87s</span></div><div class="c"><b style="height:54.00%;background:#eab308"></b><span style="transform:scaleX(1.068)">86s</span></div><div class="c"><span style="transform:scaleX(1.068)">85s</span></div><div class="c"><span style="transform:scaleX(1.068)">84s</span></div><div class="c"><span style="transform:scaleX(1.068)">83s</span></div><div class="c"><span style="transform:scaleX(1.068)">82s</span></div><div class="c"><span style="transform:scaleX(1.015)">A7o</span></div><div class="c"><span style="transform:scaleX(1.015)">K7o</span></div><div class="c"><span style="transform:scaleX(1.011)">Q7o</span></div><div class="c"><span style="transform:scaleX(1.023)">J7o</span></div><div class="c"><span style="transform:scaleX(1.017)">T7o</span></div><div class="c"><span style="transform:scaleX(1.067)">97o</span></div><div class="c"><span style="transform:scaleX(1.067)">87o</span></div><div class="c"><b style="height:100.00%;background:#eab308"></b><span style="transform:scaleX(1.080)">77</span></div><div class="c"><b style="height:86.00%;background:#eab308"></b><span style="transform:scaleX(1.068)">76s</span></div><div class="c"><b style="height:7.00%;background:#eab308"></b><span style="transform:scaleX(1.068)">75s</span></div><div class="c"><span style="transform:scaleX(1.068)">74s</span></div><div class="c"><span style="transform:scaleX(1.068)">73s</span></div><div class="c"><span style="transform:scaleX(1.068)">72s</span></div><div class="c"><span style="transform:scaleX(1.015)">A6o</span></div><div class="c"><span style="transform:scaleX(1.015)">K6o</span></div><div class="c"><span style="transform:scaleX(1.011)">Q6o</span></div><div class="c"><span style="transform:scaleX(1.023)">J6o</span></div><div class="c"><span style="transform:scaleX(1.017)">T6o</span></div><div class="c"><span style="transform:scaleX(1.067)">96o</span></div><div class="c"><span style="transform:scaleX(1.067)">86o</span></div><div class="c"><span style="transform:scaleX(1.067)">76o</span></div><div class="c"><b style="height:100.00%;background:#eab308"></b><span style="transform:scaleX(1.080)">66</span></div><div class="c"><b style="height:50.00%;background:#eab308"></b><span style="transform:scaleX(1.068)">65s</span></div><div class="c"><span style="transform:scaleX(1.068)">64s</span></div><div class="c"><span style="transform:scaleX(1.068)">63s</span></div><div class="c"><span style="transform:scaleX(1.068)">62s</span></div><div class="c"><b style="height:17.00%;background:#eab308"></b><span style="transform:scaleX(1.015)">A5o</span></div><div class="c"><span style="transform:scaleX(1.015)">K5o</span></div><div class="c"><span style="transform:scaleX(1.011)">Q5o</span></div><div class="c"><span style="transform:scaleX(1.023)">J5o</span></div><div class="c"><span style="transform:scaleX(1.017)">T5o</span></div><div class="c"><span style="transform:scaleX(1.067)">95o</span></div><div class="c"><span style="transform:scaleX(1.067)">85o</span></div><div class="c"><span style="transform:scaleX(1.067)">75o</span></div><div class="c"><span style="transform:scaleX(1.067)">65o</span></div><div class="c"><b style="height:100.00%;background:#eab308"></b><span style="transform:scaleX(1.080)">55</span></div><div class="c"><b style="height:14.00%;background:#eab308"></b><span style="transform:scaleX(1.068)">54s</span></div><div class="c"><span style="transform:scaleX(1.068)">53s</span></div><div class="c"><span style="transform:scaleX(1.068)">52s</span></div><div class="c"><span style="transform:scaleX(1.015)">A4o</span></div><div class="c"><span style="transform:scaleX(1.015)">K4o</span></div><div class="c"><span style="transform:scaleX(1.011)">Q4o</span></div><div class="c"><span style="transform:scaleX(1.023)">J4o</span></div><div class="c"><span style="transform:scaleX(1.017)">T4o</span></div><div class="c"><span style="transform:scaleX(1.067)">94o</span></div><div class="c"><span style="transform:scaleX(1.067)">84o</span></div><div class="c"><span style="transform:scaleX(1.067)">74o</span></div><div class="c"><span style="transform:scaleX(1.067)">64o</span></div><div class="c"><span style="transform:scaleX(1.067)">54o</span></div><div class="c"><b style="height:100.00%;background:#eab308"></b><span style="transform:scaleX(1.080)">44</span></div><div class="c"><span style="transform:scaleX(1.068)">43s</span></div><div class="c"><span style="transform:scaleX(1.068)">42s</span></div><div class="c"><span style="transform:scaleX(1.015)">A3o</span></div><div class="c"><span style="transform:scaleX(1.015)">K3o</span></div><div class="c"><span style="transform:scaleX(1.011)">Q3o</span></div><div class="c"><span style="transform:scaleX(1.023)">J3o</span></div><div class="c"><span style="transform:scaleX(1.017)">T3o</span></div><div class="c"><span style="transform:scaleX(1.067)">93o</span></div><div class="c"><span style="transform:scaleX(1.067)">83o</span></div><div class="c"><span style="transform:scaleX(1.067)">73o</span></div><div class="c"><span style="transform:scaleX(1.067)">63o</span></div><div class="c"><span style="transform:scaleX(1.067)">53o</span></div><div class="c"><span style="transform:scaleX(1.067)">43o</span></div><div class="c"><b style="height:74.00%;background:#eab308"></b><span style="transform:scaleX(1.080)">33</span></div><div class="c"><span style="transform:scaleX(1.068)">32s</span></div><div class="c"><span style="transform:scaleX(1.015)">A2o</span></div><div class="c"><span style="transform:scaleX(1.015)">K2o</span></div><div class="c"><span style="transform:scaleX(1.011)">Q2o</span></div><div class="c"><span style="transform:scaleX(1.023)">J2o</span></div><div class="c"><span style="transform:scaleX(1.017)">T2o</span></div><div class="c"><span style="transform:scaleX(1.067)">92o</span></div><div class="c"><span style="transform:scaleX(1.067)">82o</span></div><div class="c"><span style="transform:scaleX(1.067)">72o</span></div><div class="c"><span style="transform:scaleX(1.067)">62o</span></div><div class="c"><span style="transform:scaleX(1.067)">52o</span></div><div class="c"><span style="transform:scaleX(1.067)">42o</span></div><div class="c"><span style="transform:scaleX(1.067)">32o</span></div><div class="c"><b style="height:70.00%;background:#eab308"></b><span style="transform:scaleX(1.080)">22</span></div></div>

<div class="panel" style="left:26px;top:983px;width:1740px;height:530.5px"></div>
<svg class="abs" style="left:0;top:0" width="2854" height="1530">
  <line x1="26" y1="995" x2="1754" y2="995" stroke="#b1bac6" stroke-width="1.6"/>
  <line x1="26" y1="1245" x2="1754" y2="1245" stroke="#b1bac6" stroke-width="1.6"/>
  <line x1="26" y1="1496" x2="1754" y2="1496" stroke="#a3adba" stroke-width="2.5"/>
  <line x1="38" y1="994" x2="38" y2="1497" stroke="#b1bac6" stroke-width="1.6"/>
  <polyline points="38.0,1037.0 55.0,1037.0 55.0,1041.5 65.0,1041.5 65.0,1044.8 69.0,1044.8 69.0,1054.5 86.0,1054.5 86.0,1073.4 99.7,1073.4 99.7,1083.9 110.0,1083.9 110.0,1094.3 123.2,1094.3 123.2,1110.0 137.5,1110.0 137.5,1119.0 142.0,1119.0 142.0,1125.6 157.8,1125.6 157.8,1129.5 191.7,1133.0 191.7,1139.3 229.5,1142.0 229.5,1148.4 245.0,1148.4 245.0,1154.3 250.3,1154.3 250.3,1158.2 330.0,1164.0 352.6,1164.0 352.6,1166.8 372.8,1168.0 372.8,1175.3 382.0,1176.9 500.0,1180.0 500.0,1183.0 512.5,1183.0 512.5,1188.5 537.4,1190.0 537.4,1193.0 554.5,1193.0 554.5,1199.4 594.8,1202.0 594.8,1209.5 717.0,1221.0 717.0,1222.7 735.7,1225.0 735.7,1233.6 777.6,1238.2 777.6,1244.4 894.0,1253.0 894.0,1260.7 900.0,1260.7 900.0,1263.8 982.6,1267.0 998.0,1268.0 998.0,1276.3 1015.0,1276.3 1015.0,1281.7 1080.0,1286.6 1145.0,1291.0 1145.0,1294.3 1160.0,1294.3 1160.0,1297.5 1171.6,1297.5 1171.6,1301.3 1255.5,1306.0 1255.5,1311.4 1275.0,1311.4 1275.0,1320.0 1314.5,1322.3 1314.5,1327.0 1353.3,1327.7 1362.6,1335.5 1465.0,1342.5 1465.0,1347.0 1476.0,1349.0 1486.0,1351.5 1596.6,1359.6 1596.6,1366.5 1606.6,1366.5 1606.6,1370.8 1655.0,1373.5 1655.0,1382.0 1660.0,1382.0 1660.0,1385.7 1683.6,1387.0 1690.0,1387.0 1690.0,1390.0 1696.0,1390.0 1696.0,1392.0 1706.0,1392.5 1706.0,1400.6 1718.4,1400.6 1718.4,1405.0 1728.3,1405.0 1728.3,1408.0 1738.0,1408.5 1738.0,1409.3 1749.4,1409.8 1749.4,1415.5 1754.0,1415.0" fill="none" stroke="#84cc16" stroke-width="3"/>
  <polyline points="38.0,1040.0 79.0,1040.0 79.0,1045.0 87.0,1045.0 87.0,1050.5 108.0,1050.5 108.0,1080.0 130.0,1080.0 130.0,1084.0 137.5,1084.0 137.5,1097.5 160.0,1097.5 160.0,1104.0 183.0,1104.0 183.0,1118.0 237.0,1122.0 237.0,1126.0 268.6,1127.0 268.6,1131.0 316.8,1132.0 316.8,1137.3 320.0,1137.0 329.0,1137.0 329.0,1142.0 416.0,1145.8 416.0,1150.0 424.0,1150.0 424.0,1155.0 453.5,1156.0 453.5,1160.0 470.0,1160.0 470.0,1163.7 486.0,1164.0 486.0,1168.3 508.7,1169.0 508.7,1174.0 525.0,1174.0 525.0,1182.3 540.5,1182.3 540.5,1190.0 556.8,1190.0 556.8,1199.4 582.0,1200.2 582.0,1201.7 589.0,1202.0 589.0,1204.8 599.0,1205.0 599.0,1206.8 608.0,1207.0 608.0,1209.5 714.4,1218.8 714.4,1229.0 722.5,1229.0 722.5,1236.7 735.0,1236.7 735.0,1239.8 771.4,1241.3 771.4,1251.0 892.5,1255.3 894.0,1259.0 900.0,1259.0 900.0,1262.3 926.7,1262.3 926.7,1266.2 982.6,1269.3 982.6,1272.4 1066.5,1274.0 1066.5,1277.8 1105.6,1278.6 1105.6,1283.5 1177.0,1284.0 1177.0,1290.5 1193.0,1290.5 1193.0,1292.8 1264.8,1293.6 1264.8,1296.0 1277.0,1296.0 1277.0,1299.0 1295.0,1299.0 1295.0,1306.0 1321.5,1307.0 1321.5,1311.4 1331.5,1311.4 1331.5,1315.3 1355.6,1315.3 1355.6,1319.2 1448.0,1323.0 1448.0,1327.7 1470.0,1327.7 1470.0,1331.6 1518.4,1333.5 1518.4,1338.8 1612.8,1339.8 1612.8,1344.0 1629.0,1344.0 1629.0,1348.2 1703.5,1351.0 1703.5,1357.8 1707.8,1357.8 1707.8,1365.2 1730.8,1365.2 1730.8,1375.8 1739.5,1375.8 1739.5,1383.2 1754.0,1383.2" fill="none" stroke="#0ea5e9" stroke-width="3"/>
</svg>

<div class="panel" style="left:1798px;top:428px;width:1044px;height:274px"></div>
<div class="abtn" style="left:1814px;background:#e165e8"></div>
<div class="abtn" style="left:2157px;width:326px;background:#f6655f"></div>
<div class="abtn" style="left:2499px;background:#08d84f"></div>
<div class="tog" style="left:1882px;width:192px;background:#e2e8f0;border-radius:8px 0 0 8px"></div>
<div class="tog" style="left:2074px;width:192px;background:#94a3b8;border-radius:0 8px 8px 0"></div>
<div class="tog" style="left:2374px;width:192px;background:#94a3b8;border-radius:8px 0 0 8px"></div>
<div class="tog" style="left:2566px;width:192px;background:#e2e8f0;border-radius:0 8px 8px 0"></div>
<div class="t " style="left:1937.63px;top:467.90px;font-size:32.99px;line-height:32.99px;font-weight:normal;color:#0c4a6e;transform:scaleX(1.0162);">Bet 3</div><div class="t " style="left:1929.33px;top:517.73px;font-size:33.14px;line-height:33.14px;font-weight:normal;color:#0c4a6e;transform:scaleX(1.0062);">63.2%</div><div class="t " style="left:2283.80px;top:467.90px;font-size:32.99px;line-height:32.99px;font-weight:normal;color:#0c4a6e;transform:scaleX(0.9196);">Bet 1</div><div class="t " style="left:2274.22px;top:517.73px;font-size:33.14px;line-height:33.14px;font-weight:normal;color:#0c4a6e;transform:scaleX(0.9556);">14.6%</div><div class="t " style="left:2615.58px;top:467.90px;font-size:32.99px;line-height:32.99px;font-weight:normal;color:#0c4a6e;transform:scaleX(0.9849);">Check</div><div class="t " style="left:2615.55px;top:517.73px;font-size:33.14px;line-height:33.14px;font-weight:normal;color:#0c4a6e;transform:scaleX(0.9930);">22.2%</div><div class="t " style="left:1927.35px;top:607.17px;font-size:24.85px;line-height:24.85px;font-weight:bold;color:#0c4a6e;transform:scaleX(1.0117);">Strategy</div><div class="t " style="left:2125.46px;top:607.44px;font-size:24.13px;line-height:24.13px;font-weight:bold;color:#0c4a6e;transform:scaleX(1.0063);">Ranges</div><div class="t " style="left:2407.04px;top:607.46px;font-size:24.27px;line-height:24.27px;font-weight:bold;color:#0c4a6e;transform:scaleX(1.0121);">Frequency</div><div class="t " style="left:2647.66px;top:607.46px;font-size:24.27px;line-height:24.27px;font-weight:bold;color:#0c4a6e;transform:scaleX(0.9401);">Ev</div>

<div class="panel" style="left:1798px;top:726px;width:1044px;height:787px;overflow:hidden"><div style="position:absolute;left:0;right:0;bottom:0;height:24px;background:linear-gradient(rgba(100,116,139,0),rgba(100,116,139,.12))"></div></div>
<div class="abs" style="left:1820px;top:748px;width:1000px;height:744px;background:#0c4a6e;box-shadow:0 6px 10px -3px rgba(0,0,0,.06),0 3px 6px -3px rgba(0,0,0,.06)"></div>
<div class="abs" style="left:1822px;top:750px;width:496px;height:245px;background:#e165e8"></div>
<div class="abs" style="left:2320px;top:750px;width:498px;height:245px;background:#e165e8"></div>
<div class="abs" style="left:1822px;top:997px;width:496px;height:244px;background:#e165e8"></div>
<div class="abs" style="left:2320px;top:997px;width:498px;height:244px;background:#e165e8"></div>
<div class="abs" style="left:1822px;top:1243px;width:496px;height:247px;background:#e165e8"></div>
<div class="abs" style="left:2320px;top:1243px;width:498px;height:247px;background:#e165e8"></div>
<div class="lbx" style="left:1822px;top:756px;width:98.70px"></div><div class="t " style="left:1822.53px;top:757.78px;font-size:33.43px;line-height:33.43px;font-weight:normal;color:#000;transform:scaleX(0.8895);">A</div><svg class="sv" style="left:1844.10px;top:762.20px" width="24" height="25" viewBox="0 0 24 25"><path d="M12 1 C15 6 23 10.5 23 15.5 C23 19 20.5 21 18 21 C16 21 14.2 20 13.2 18.8 C13.4 20.8 14.4 22.6 16.2 24 L7.8 24 C9.6 22.6 10.6 20.8 10.8 18.8 C9.8 20 8 21 6 21 C3.5 21 1 19 1 15.5 C1 10.5 9 6 12 1Z" fill="#000"/></svg><div class="t " style="left:1870.23px;top:757.78px;font-size:33.43px;line-height:33.43px;font-weight:normal;color:#db2777;transform:scaleX(0.8895);">A</div><svg class="sv" style="left:1891.80px;top:762.20px" width="25.5" height="25" viewBox="0 0 25.5 25"><path d="M12.75 24 C10.5 21.8 0.3 15 0.3 7.4 C0.3 3.3 3.3 0.4 7 0.4 C9.6 0.4 11.6 1.9 12.75 4.1 C13.9 1.9 15.9 0.4 18.5 0.4 C22.2 0.4 25.2 3.3 25.2 7.4 C25.2 15 15 21.8 12.75 24Z" fill="#db2777"/></svg><div class="t " style="left:1821.67px;top:855.98px;font-size:32.85px;line-height:32.85px;font-weight:normal;color:#0c4a6e;transform:scaleX(1.0056);">Bet 3</div><div class="t " style="left:2210.90px;top:855.98px;font-size:32.85px;line-height:32.85px;font-weight:normal;color:#0c4a6e;transform:scaleX(0.9736);">100.0%</div><div class="t " style="left:1821.93px;top:905.78px;font-size:32.85px;line-height:32.85px;font-weight:normal;color:#0c4a6e;transform:scaleX(0.9126);">Bet 1</div><div class="t " style="left:2246.22px;top:905.78px;font-size:32.85px;line-height:32.85px;font-weight:normal;color:#0c4a6e;transform:scaleX(0.9772);">0.0%</div><div class="t " style="left:1822.78px;top:955.58px;font-size:32.85px;line-height:32.85px;font-weight:normal;color:#0c4a6e;transform:scaleX(0.9882);">Check</div><div class="t " style="left:2246.22px;top:955.58px;font-size:32.85px;line-height:32.85px;font-weight:normal;color:#0c4a6e;transform:scaleX(0.9772);">0.0%</div><div class="lbx" style="left:2320px;top:756px;width:93.70px"></div><div class="t " style="left:2320.53px;top:757.78px;font-size:33.43px;line-height:33.43px;font-weight:normal;color:#000;transform:scaleX(0.8895);">A</div><svg class="sv" style="left:2342.10px;top:762.20px" width="24" height="25" viewBox="0 0 24 25"><path d="M12 1 C15 6 23 10.5 23 15.5 C23 19 20.5 21 18 21 C16 21 14.2 20 13.2 18.8 C13.4 20.8 14.4 22.6 16.2 24 L7.8 24 C9.6 22.6 10.6 20.8 10.8 18.8 C9.8 20 8 21 6 21 C3.5 21 1 19 1 15.5 C1 10.5 9 6 12 1Z" fill="#000"/></svg><div class="t " style="left:2368.23px;top:757.78px;font-size:33.43px;line-height:33.43px;font-weight:normal;color:#3b82f6;transform:scaleX(0.8895);">A</div><svg class="sv" style="left:2389.80px;top:762.20px" width="20.5" height="25" viewBox="0 0 20.5 25"><path d="M10.25 0 L20.5 12.25 L10.25 24.5 L0 12.25Z" fill="#3b82f6"/></svg><div class="t " style="left:2319.67px;top:855.98px;font-size:32.85px;line-height:32.85px;font-weight:normal;color:#0c4a6e;transform:scaleX(1.0056);">Bet 3</div><div class="t " style="left:2708.90px;top:855.98px;font-size:32.85px;line-height:32.85px;font-weight:normal;color:#0c4a6e;transform:scaleX(0.9736);">100.0%</div><div class="t " style="left:2319.93px;top:905.78px;font-size:32.85px;line-height:32.85px;font-weight:normal;color:#0c4a6e;transform:scaleX(0.9126);">Bet 1</div><div class="t " style="left:2744.22px;top:905.78px;font-size:32.85px;line-height:32.85px;font-weight:normal;color:#0c4a6e;transform:scaleX(0.9772);">0.0%</div><div class="t " style="left:2320.78px;top:955.58px;font-size:32.85px;line-height:32.85px;font-weight:normal;color:#0c4a6e;transform:scaleX(0.9882);">Check</div><div class="t " style="left:2744.22px;top:955.58px;font-size:32.85px;line-height:32.85px;font-weight:normal;color:#0c4a6e;transform:scaleX(0.9772);">0.0%</div><div class="lbx" style="left:1822px;top:1003px;width:95.20px"></div><div class="t " style="left:1822.53px;top:1004.78px;font-size:33.43px;line-height:33.43px;font-weight:normal;color:#db2777;transform:scaleX(0.8895);">A</div><svg class="sv" style="left:1844.10px;top:1009.20px" width="25.5" height="25" viewBox="0 0 25.5 25"><path d="M12.75 24 C10.5 21.8 0.3 15 0.3 7.4 C0.3 3.3 3.3 0.4 7 0.4 C9.6 0.4 11.6 1.9 12.75 4.1 C13.9 1.9 15.9 0.4 18.5 0.4 C22.2 0.4 25.2 3.3 25.2 7.4 C25.2 15 15 21.8 12.75 24Z" fill="#db2777"/></svg><div class="t " style="left:1871.73px;top:1004.78px;font-size:33.43px;line-height:33.43px;font-weight:normal;color:#3b82f6;transform:scaleX(0.8895);">A</div><svg class="sv" style="left:1893.30px;top:1009.20px" width="20.5" height="25" viewBox="0 0 20.5 25"><path d="M10.25 0 L20.5 12.25 L10.25 24.5 L0 12.25Z" fill="#3b82f6"/></svg><div class="t " style="left:1821.67px;top:1102.98px;font-size:32.85px;line-height:32.85px;font-weight:normal;color:#0c4a6e;transform:scaleX(1.0056);">Bet 3</div><div class="t " style="left:2210.90px;top:1102.98px;font-size:32.85px;line-height:32.85px;font-weight:normal;color:#0c4a6e;transform:scaleX(0.9736);">100.0%</div><div class="t " style="left:1821.93px;top:1152.78px;font-size:32.85px;line-height:32.85px;font-weight:normal;color:#0c4a6e;transform:scaleX(0.9126);">Bet 1</div><div class="t " style="left:2246.22px;top:1152.78px;font-size:32.85px;line-height:32.85px;font-weight:normal;color:#0c4a6e;transform:scaleX(0.9772);">0.0%</div><div class="t " style="left:1822.78px;top:1202.58px;font-size:32.85px;line-height:32.85px;font-weight:normal;color:#0c4a6e;transform:scaleX(0.9882);">Check</div><div class="t " style="left:2246.22px;top:1202.58px;font-size:32.85px;line-height:32.85px;font-weight:normal;color:#0c4a6e;transform:scaleX(0.9772);">0.0%</div><div class="lbx" style="left:2320px;top:1003px;width:98.20px"></div><div class="t " style="left:2320.53px;top:1004.78px;font-size:33.43px;line-height:33.43px;font-weight:normal;color:#000;transform:scaleX(0.8895);">A</div><svg class="sv" style="left:2342.10px;top:1009.20px" width="24" height="25" viewBox="0 0 24 25"><path d="M12 1 C15 6 23 10.5 23 15.5 C23 19 20.5 21 18 21 C16 21 14.2 20 13.2 18.8 C13.4 20.8 14.4 22.6 16.2 24 L7.8 24 C9.6 22.6 10.6 20.8 10.8 18.8 C9.8 20 8 21 6 21 C3.5 21 1 19 1 15.5 C1 10.5 9 6 12 1Z" fill="#000"/></svg><div class="t " style="left:2368.23px;top:1004.78px;font-size:33.43px;line-height:33.43px;font-weight:normal;color:#16a34a;transform:scaleX(0.8895);">A</div><svg class="sv" style="left:2389.80px;top:1009.20px" width="25" height="25" viewBox="0 0 25 25"><path d="M12.5 1 C15.6 1 18 3.4 18 6.5 C18 7.6 17.7 8.6 17.1 9.4 C17.6 9.3 18.1 9.2 18.6 9.2 C21.9 9.2 24.5 11.8 24.5 15 C24.5 18.2 21.9 20.8 18.6 20.8 C16.8 20.8 15.2 20 14.1 18.7 C14.3 20.8 15.3 22.6 17 24 L8 24 C9.7 22.6 10.7 20.8 10.9 18.7 C9.8 20 8.2 20.8 6.4 20.8 C3.1 20.8 0.5 18.2 0.5 15 C0.5 11.8 3.1 9.2 6.4 9.2 C6.9 9.2 7.4 9.3 7.9 9.4 C7.3 8.6 7 7.6 7 6.5 C7 3.4 9.4 1 12.5 1Z" fill="#16a34a"/></svg><div class="t " style="left:2319.67px;top:1102.98px;font-size:32.85px;line-height:32.85px;font-weight:normal;color:#0c4a6e;transform:scaleX(1.0056);">Bet 3</div><div class="t " style="left:2708.90px;top:1102.98px;font-size:32.85px;line-height:32.85px;font-weight:normal;color:#0c4a6e;transform:scaleX(0.9736);">100.0%</div><div class="t " style="left:2319.93px;top:1152.78px;font-size:32.85px;line-height:32.85px;font-weight:normal;color:#0c4a6e;transform:scaleX(0.9126);">Bet 1</div><div class="t " style="left:2744.22px;top:1152.78px;font-size:32.85px;line-height:32.85px;font-weight:normal;color:#0c4a6e;transform:scaleX(0.9772);">0.0%</div><div class="t " style="left:2320.78px;top:1202.58px;font-size:32.85px;line-height:32.85px;font-weight:normal;color:#0c4a6e;transform:scaleX(0.9882);">Check</div><div class="t " style="left:2744.22px;top:1202.58px;font-size:32.85px;line-height:32.85px;font-weight:normal;color:#0c4a6e;transform:scaleX(0.9772);">0.0%</div><div class="lbx" style="left:1822px;top:1249px;width:99.70px"></div><div class="t " style="left:1822.53px;top:1250.78px;font-size:33.43px;line-height:33.43px;font-weight:normal;color:#db2777;transform:scaleX(0.8895);">A</div><svg class="sv" style="left:1844.10px;top:1255.20px" width="25.5" height="25" viewBox="0 0 25.5 25"><path d="M12.75 24 C10.5 21.8 0.3 15 0.3 7.4 C0.3 3.3 3.3 0.4 7 0.4 C9.6 0.4 11.6 1.9 12.75 4.1 C13.9 1.9 15.9 0.4 18.5 0.4 C22.2 0.4 25.2 3.3 25.2 7.4 C25.2 15 15 21.8 12.75 24Z" fill="#db2777"/></svg><div class="t " style="left:1871.73px;top:1250.78px;font-size:33.43px;line-height:33.43px;font-weight:normal;color:#16a34a;transform:scaleX(0.8895);">A</div><svg class="sv" style="left:1893.30px;top:1255.20px" width="25" height="25" viewBox="0 0 25 25"><path d="M12.5 1 C15.6 1 18 3.4 18 6.5 C18 7.6 17.7 8.6 17.1 9.4 C17.6 9.3 18.1 9.2 18.6 9.2 C21.9 9.2 24.5 11.8 24.5 15 C24.5 18.2 21.9 20.8 18.6 20.8 C16.8 20.8 15.2 20 14.1 18.7 C14.3 20.8 15.3 22.6 17 24 L8 24 C9.7 22.6 10.7 20.8 10.9 18.7 C9.8 20 8.2 20.8 6.4 20.8 C3.1 20.8 0.5 18.2 0.5 15 C0.5 11.8 3.1 9.2 6.4 9.2 C6.9 9.2 7.4 9.3 7.9 9.4 C7.3 8.6 7 7.6 7 6.5 C7 3.4 9.4 1 12.5 1Z" fill="#16a34a"/></svg><div class="t " style="left:1821.67px;top:1348.98px;font-size:32.85px;line-height:32.85px;font-weight:normal;color:#0c4a6e;transform:scaleX(1.0056);">Bet 3</div><div class="t " style="left:2210.90px;top:1348.98px;font-size:32.85px;line-height:32.85px;font-weight:normal;color:#0c4a6e;transform:scaleX(0.9736);">100.0%</div><div class="t " style="left:1821.93px;top:1398.78px;font-size:32.85px;line-height:32.85px;font-weight:normal;color:#0c4a6e;transform:scaleX(0.9126);">Bet 1</div><div class="t " style="left:2246.22px;top:1398.78px;font-size:32.85px;line-height:32.85px;font-weight:normal;color:#0c4a6e;transform:scaleX(0.9772);">0.0%</div><div class="t " style="left:1822.78px;top:1448.58px;font-size:32.85px;line-height:32.85px;font-weight:normal;color:#0c4a6e;transform:scaleX(0.9882);">Check</div><div class="t " style="left:2246.22px;top:1448.58px;font-size:32.85px;line-height:32.85px;font-weight:normal;color:#0c4a6e;transform:scaleX(0.9772);">0.0%</div><div class="lbx" style="left:2320px;top:1249px;width:94.70px"></div><div class="t " style="left:2320.53px;top:1250.78px;font-size:33.43px;line-height:33.43px;font-weight:normal;color:#3b82f6;transform:scaleX(0.8895);">A</div><svg class="sv" style="left:2342.10px;top:1255.20px" width="20.5" height="25" viewBox="0 0 20.5 25"><path d="M10.25 0 L20.5 12.25 L10.25 24.5 L0 12.25Z" fill="#3b82f6"/></svg><div class="t " style="left:2364.73px;top:1250.78px;font-size:33.43px;line-height:33.43px;font-weight:normal;color:#16a34a;transform:scaleX(0.8895);">A</div><svg class="sv" style="left:2386.30px;top:1255.20px" width="25" height="25" viewBox="0 0 25 25"><path d="M12.5 1 C15.6 1 18 3.4 18 6.5 C18 7.6 17.7 8.6 17.1 9.4 C17.6 9.3 18.1 9.2 18.6 9.2 C21.9 9.2 24.5 11.8 24.5 15 C24.5 18.2 21.9 20.8 18.6 20.8 C16.8 20.8 15.2 20 14.1 18.7 C14.3 20.8 15.3 22.6 17 24 L8 24 C9.7 22.6 10.7 20.8 10.9 18.7 C9.8 20 8.2 20.8 6.4 20.8 C3.1 20.8 0.5 18.2 0.5 15 C0.5 11.8 3.1 9.2 6.4 9.2 C6.9 9.2 7.4 9.3 7.9 9.4 C7.3 8.6 7 7.6 7 6.5 C7 3.4 9.4 1 12.5 1Z" fill="#16a34a"/></svg><div class="t " style="left:2319.67px;top:1348.98px;font-size:32.85px;line-height:32.85px;font-weight:normal;color:#0c4a6e;transform:scaleX(1.0056);">Bet 3</div><div class="t " style="left:2708.90px;top:1348.98px;font-size:32.85px;line-height:32.85px;font-weight:normal;color:#0c4a6e;transform:scaleX(0.9736);">100.0%</div><div class="t " style="left:2319.93px;top:1398.78px;font-size:32.85px;line-height:32.85px;font-weight:normal;color:#0c4a6e;transform:scaleX(0.9126);">Bet 1</div><div class="t " style="left:2744.22px;top:1398.78px;font-size:32.85px;line-height:32.85px;font-weight:normal;color:#0c4a6e;transform:scaleX(0.9772);">0.0%</div><div class="t " style="left:2320.78px;top:1448.58px;font-size:32.85px;line-height:32.85px;font-weight:normal;color:#0c4a6e;transform:scaleX(0.9882);">Check</div><div class="t " style="left:2744.22px;top:1448.58px;font-size:32.85px;line-height:32.85px;font-weight:normal;color:#0c4a6e;transform:scaleX(0.9772);">0.0%</div>
<div style="position:absolute;left:0;top:1460px;width:2854px;height:70px;background:linear-gradient(rgba(71,85,105,0),rgba(71,85,105,.10));pointer-events:none"></div>
</body></html>
